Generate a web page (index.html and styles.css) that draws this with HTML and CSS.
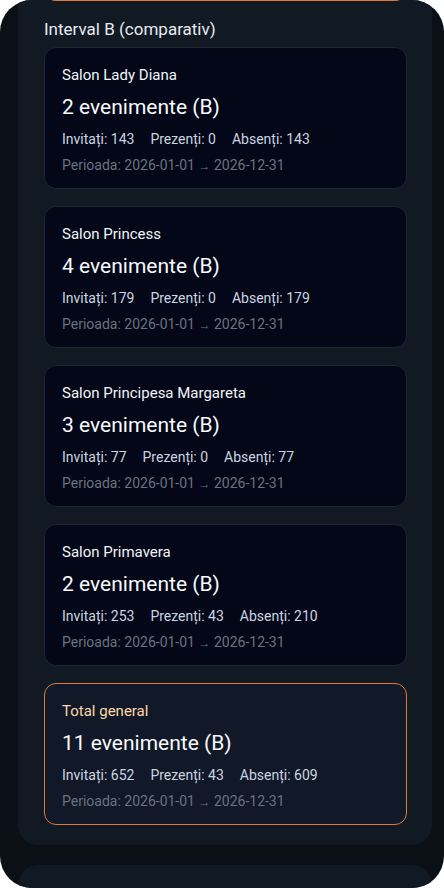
FILE: index.html
```html
<!DOCTYPE html>
<html lang="ro">
<head>
  <meta charset="UTF-8">
  <title>Interval B (comparativ)</title>
  <meta name="viewport" content="width=device-width,initial-scale=1">
  <link rel="stylesheet" href="styles.css">
</head>
<body>
<div class="device">
  <section class="panel">
    <div class="prev-tail"></div>
    <h2>Interval B (comparativ)</h2>

    <div class="card">
      <div class="name">Salon Lady Diana</div>
      <div class="count">2 evenimente (B)</div>
      <div class="stats"><span>Invitați: 143</span><span>Prezenți: 0</span><span>Absenți: 143</span></div>
      <div class="period">Perioada: 2026-01-01 <span class="arrow">→</span> 2026-12-31</div>
    </div>

    <div class="card">
      <div class="name">Salon Princess</div>
      <div class="count">4 evenimente (B)</div>
      <div class="stats"><span>Invitați: 179</span><span>Prezenți: 0</span><span>Absenți: 179</span></div>
      <div class="period">Perioada: 2026-01-01 <span class="arrow">→</span> 2026-12-31</div>
    </div>

    <div class="card">
      <div class="name">Salon Principesa Margareta</div>
      <div class="count">3 evenimente (B)</div>
      <div class="stats"><span>Invitați: 77</span><span>Prezenți: 0</span><span>Absenți: 77</span></div>
      <div class="period">Perioada: 2026-01-01 <span class="arrow">→</span> 2026-12-31</div>
    </div>

    <div class="card">
      <div class="name">Salon Primavera</div>
      <div class="count">2 evenimente (B)</div>
      <div class="stats"><span>Invitați: 253</span><span>Prezenți: 43</span><span>Absenți: 210</span></div>
      <div class="period">Perioada: 2026-01-01 <span class="arrow">→</span> 2026-12-31</div>
    </div>

    <div class="card total">
      <div class="name">Total general</div>
      <div class="count">11 evenimente (B)</div>
      <div class="stats"><span>Invitați: 652</span><span>Prezenți: 43</span><span>Absenți: 609</span></div>
      <div class="period">Perioada: 2026-01-01 <span class="arrow">→</span> 2026-12-31</div>
    </div>
  </section>
  <section class="panel next"></section>
</div>
</body>
</html>
```

FILE: styles.css
```css
body {
  margin: 0;
  background: #fff;
  font-family: Roboto, "Noto Sans", Arial, sans-serif;
  color: #e5e7eb;
}
.device {
  width: 444px;
  height: 888px;
  box-sizing: border-box;
  padding: 0 12px 0 18px;
  background: #0b1016;
  border-radius: 32px;
  overflow: hidden;
}
.panel {
  display: flex;
  flex-direction: column;
  gap: 17px;
  background: #111923;
  border-radius: 0 0 20px 20px;
  padding: 0 25px 20px 26px;
}
.prev-tail {
  height: 11px;
  margin-top: -11px;
  margin-bottom: -17px;
  border: 1px solid #dd7a3a;
  border-top: none;
  border-radius: 0 0 12px 12px;
}
h2 {
  margin: 16px 0 -11px 0;
  font-size: 17px;
  line-height: 24px;
  font-weight: 400;
  color: #e8ebef;
}
.card {
  background: #030717;
  border: 1px solid #1d2635;
  border-radius: 12px;
  padding: 17px 17px 14px 17px;
}
.name {
  font-size: 15px;
  line-height: 20px;
  color: #f1f5f9;
}
.count {
  margin-top: 8px;
  font-size: 21px;
  line-height: 28px;
  color: #f8fafc;
}
.stats {
  margin-top: 9px;
  display: flex;
  gap: 16px;
  font-size: 14px;
  line-height: 18px;
  color: #cbd5e1;
}
.period {
  margin-top: 8px;
  font-size: 14px;
  line-height: 18px;
  color: #6b7280;
}
.arrow {
  font-size: 12px;
  line-height: 0;
}
.total {
  background: #111827;
  border-color: #dd7a3a;
}
.total .name {
  color: #fdd9a8;
}
.next {
  margin-top: 20px;
  height: 60px;
  border-radius: 20px 20px 0 0;
}
```
